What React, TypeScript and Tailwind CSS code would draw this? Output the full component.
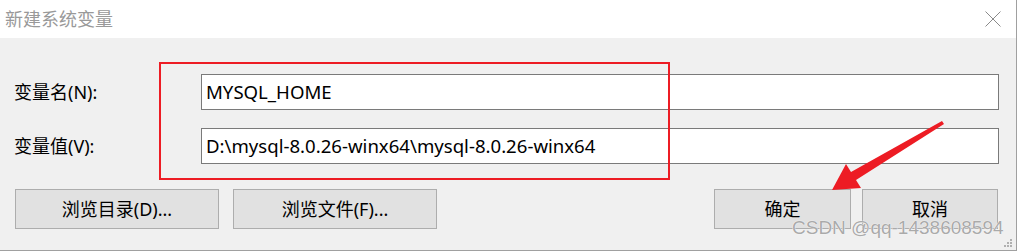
import React from "react";

const ui = `font-['Noto_Sans','Noto_Sans_CJK_SC',sans-serif]`;

const Btn = ({ label, w }: { label: string; w: string }) => (
  <button
    className={`${w} h-[40px] bg-[#e1e1e1] border border-[#adadad] text-[18px] text-black ${ui} flex items-center justify-center`}
  >
    {label}
  </button>
);

const Field = ({ label, value }: { label: string; value: string }) => (
  <div className="flex items-center h-[36px]">
    <div className={`w-[187px] text-[18px] text-black ${ui}`}>{label}</div>
    <div
      className={`w-[798px] h-[36px] bg-white border border-[#7a7a7a] flex items-center pl-[4px] text-[18.6px] text-black ${ui}`}
    >
      {value}
    </div>
  </div>
);

export default function App() {
  return (
    <div className="relative w-[1020px] h-[252px] bg-white overflow-hidden">
      <div className="w-[1017px] h-[251px] border-r border-b border-[#a0a0a0] flex flex-col">
        {/* title bar */}
        <div className="h-[38px] bg-white flex items-center justify-between pl-[5px] pr-[15px]">
          <span className={`text-[18px] text-[#999999] ${ui}`}>新建系统变量</span>
          <svg width="16" height="16" viewBox="0 0 16 16">
            <path d="M0.5 0.5 L15.5 15.5 M15.5 0.5 L0.5 15.5" stroke="#8a8a8a" strokeWidth="1" fill="none" />
          </svg>
        </div>

        {/* body */}
        <div className="flex-1 bg-[#f0f0f0] pt-[36px] pl-[14px] flex flex-col">
          <Field label="变量名(N):" value="MYSQL_HOME" />
          <div className="h-[18px]" />
          <Field label="变量值(V):" value="D:\mysql-8.0.26-winx64\mysql-8.0.26-winx64" />
          <div className="mt-[25px] flex pl-[1px]">
            <Btn label="浏览目录(D)..." w="w-[204px]" />
            <div className="w-[14px]" />
            <Btn label="浏览文件(F)..." w="w-[204px]" />
            <div className="w-[277px]" />
            <Btn label="确定" w="w-[137px]" />
            <div className="w-[11px]" />
            <Btn label="取消" w="w-[136px]" />
          </div>
        </div>
      </div>

      {/* red annotation box */}
      <div className="absolute left-[159px] top-[62px] w-[511px] h-[118px] border-2 border-[#ed1c24]" />

      {/* red arrow */}
      <svg className="absolute left-0 top-0" width="1020" height="252" viewBox="0 0 1020 252">
        <polygon
          points="832,190 846,164 851,172 942,121 944,124 856,180 861,188"
          fill="#ed1c24"
        />
      </svg>

      {/* watermark */}
      <div
        className="absolute left-[792px] top-[216px] text-[19px] leading-[24px] text-[#aaaaaa] font-['Liberation_Sans',sans-serif] [text-shadow:0_0_1px_#ffffff,0_0_1px_#ffffff]"
      >
        CSDN @qq-1438608594
      </div>

      {/* resize grip */}
      <div className="absolute left-[1004px] top-[239px] grid grid-cols-3 gap-[1px]">
        <span className="w-[2px] h-[2px]" />
        <span className="w-[2px] h-[2px]" />
        <span className="w-[2px] h-[2px] bg-[#b0b0b0]" />
        <span className="w-[2px] h-[2px]" />
        <span className="w-[2px] h-[2px] bg-[#b0b0b0]" />
        <span className="w-[2px] h-[2px] bg-[#b0b0b0]" />
        <span className="w-[2px] h-[2px] bg-[#b0b0b0]" />
        <span className="w-[2px] h-[2px] bg-[#b0b0b0]" />
        <span className="w-[2px] h-[2px] bg-[#b0b0b0]" />
      </div>
    </div>
  );
}
